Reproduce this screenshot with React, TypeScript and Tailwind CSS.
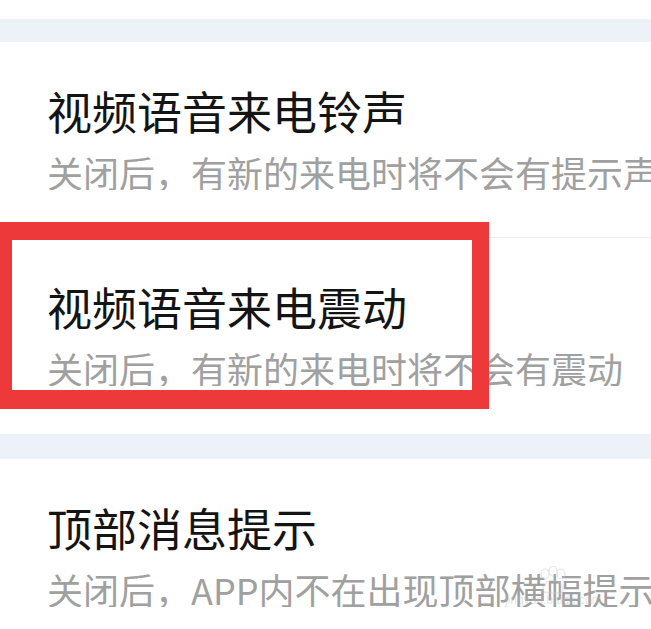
import React from 'react';

const font = { fontFamily: '"Noto Sans CJK SC", "Noto Sans", sans-serif' };

const Item = ({ title, desc, divider }: { title: string; desc: string; divider?: boolean }) => (
  <div className="relative flex shrink-0 flex-col gap-[21px] bg-white pl-[47px] pt-[46px] pb-[48px]">
    <div className="text-[45px] leading-[45px] text-[#141414] whitespace-nowrap">{title}</div>
    <div className="text-[36px] leading-[36px] text-[#a0a0a0] whitespace-nowrap overflow-hidden">{desc}</div>
    {divider && <div className="absolute bottom-0 left-[47px] right-0 h-px bg-[#ededed]" />}
  </div>
);

const App: React.FC = () => {
  return (
    <div className="relative flex flex-col w-[651px] h-[629px] overflow-hidden bg-white pt-[19px]" style={font}>
      <div className="h-[23px] shrink-0 bg-[#edf1f8]" />
      <Item title="视频语音来电铃声" desc="关闭后，有新的来电时将不会有提示声" divider />
      <Item title="视频语音来电震动" desc="关闭后，有新的来电时将不会有震动" />
      <div className="h-[25px] shrink-0 bg-[#edf1f8]" />
      <Item title="顶部消息提示" desc="关闭后，APP内不在出现顶部横幅提示" />

      {/* highlight box */}
      <div className="absolute left-0 top-[222px] w-[489px] h-[187px] border-[#ee393a] border-l-[12px] border-t-[18px] border-r-[17px] border-b-[19px]" />

      {/* watermark */}
      <div className="absolute left-[505px] top-[566px] flex flex-col items-center opacity-40 pointer-events-none">
        <svg width="40" height="28" viewBox="0 0 40 28" fill="none" stroke="#ccc" strokeWidth="1.5">
          <ellipse cx="12" cy="8" rx="4" ry="5" />
          <ellipse cx="20" cy="5" rx="4" ry="5" />
          <ellipse cx="28" cy="8" rx="4" ry="5" />
          <path d="M10 24c0-6 5-10 10-10s10 4 10 10c0 3-4 3-10 3s-10 0-10-3z" />
        </svg>
        <span className="text-[12px] leading-none text-[#bbb]" style={{ fontFamily: '"Liberation Sans", sans-serif' }}>jingyan.baidu.com</span>
      </div>
    </div>
  );
};

export default App;
